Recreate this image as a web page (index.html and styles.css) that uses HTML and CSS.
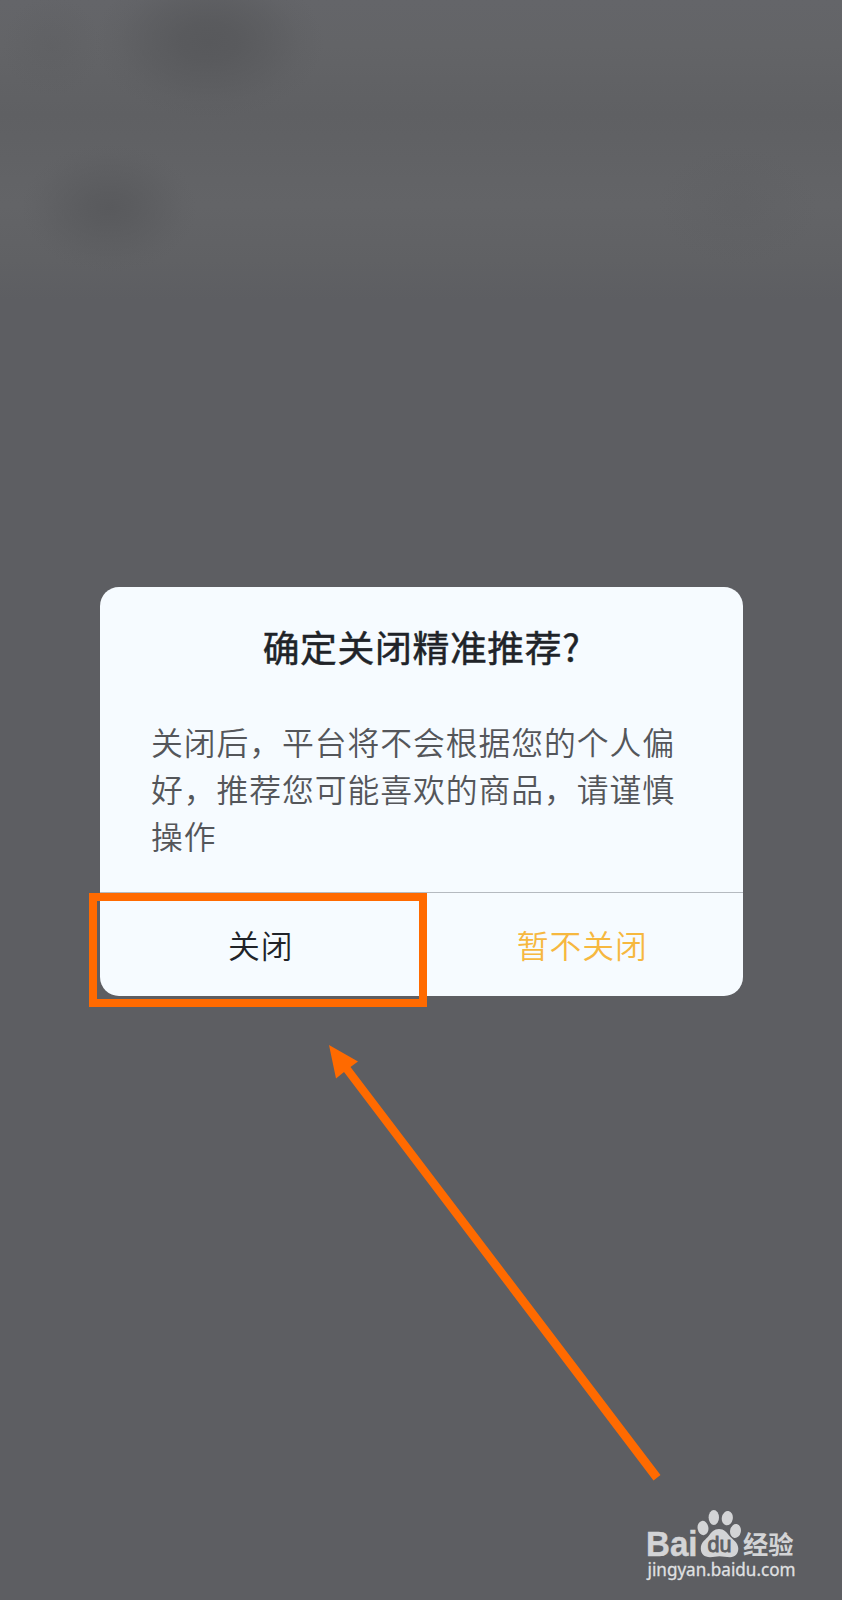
FILE: index.html
```html
<!DOCTYPE html>
<html lang="zh-CN">
<head>
<meta charset="utf-8">
<title>确定关闭精准推荐?</title>
<link rel="stylesheet" href="styles.css">
</head>
<body>
<main class="screen">
  <section class="dialog" role="dialog">
    <div class="content">
      <h1 class="title">确定关闭精准推荐?</h1>
      <p class="message">关闭后，平台将不会根据您的个人偏好，推荐您可能喜欢的商品，请谨慎操作</p>
    </div>
    <div class="actions">
      <button class="action">关闭</button>
      <button class="action primary">暂不关闭</button>
    </div>
  </section>

  <div class="highlight"></div>
  <svg class="arrow" width="842" height="1600" viewBox="0 0 842 1600">
    <path d="M329 1045L358 1061.5L350.5 1067L660.5 1475L653.5 1480.5L344 1072L336 1078.5Z"/>
  </svg>

  <svg class="watermark" width="162" height="90" viewBox="638 1500 162 90">
    <text class="brand" x="646" y="1556" textLength="51.5" lengthAdjust="spacingAndGlyphs">Bai</text>
    <ellipse cx="703" cy="1528" rx="5.4" ry="7.2" transform="rotate(-10 703 1528)"/>
    <ellipse cx="713.8" cy="1517.5" rx="5.2" ry="7.6"/>
    <ellipse cx="727.3" cy="1518.2" rx="5.5" ry="7.2" transform="rotate(10 727.3 1518.2)"/>
    <ellipse cx="735.5" cy="1531" rx="5.4" ry="7" transform="rotate(10 735.5 1531)"/>
    <path d="M719 1529C714 1529 711.500 1532 709 1535.500C706 1539.500 700.800 1542 700.800 1548.500C700.800 1554 704.500 1557.200 710 1557.200C714 1557.200 716 1556.300 719.500 1556.300C723 1556.300 726 1557.200 730 1557.200C735.300 1557.200 738.300 1553.500 738.300 1548.500C738.300 1542.500 732.500 1539.500 729.500 1536C727 1532.500 724 1529 719 1529Z"/>
    <text class="du" x="707.5" y="1552" textLength="24" lengthAdjust="spacingAndGlyphs">du</text>
    <text class="cn" x="743" y="1554" textLength="50.500" lengthAdjust="spacingAndGlyphs">经验</text>
    <text class="url" x="647.5" y="1576" textLength="148" lengthAdjust="spacingAndGlyphs">jingyan.baidu.com</text>
  </svg>
</main>
</body>
</html>
```
FILE: styles.css
```css
* { box-sizing: border-box; }
body { margin: 0; }

.screen {
  position: relative;
  width: 842px;
  height: 1600px;
  padding: 586.5px 99px 0 100px;
  overflow: hidden;
  font-family: "Noto Sans CJK SC", sans-serif;
  background:
    radial-gradient(ellipse 115px 76px at 209px 42px, #58595c 0, rgba(88,89,92,.88) 25%, rgba(88,89,92,.5) 55%, rgba(88,89,92,.15) 80%, transparent 100%),
    radial-gradient(ellipse 88px 64px at 109px 208px, #595a5d 0, rgba(89,90,93,.8) 25%, rgba(89,90,93,.4) 60%, rgba(89,90,93,.1) 85%, transparent 100%),
    radial-gradient(ellipse 50px 50px at 52px 46px, rgba(88,89,92,.25), transparent),
    radial-gradient(ellipse 80px 60px at 738px 206px, rgba(88,89,92,.2), transparent),
    linear-gradient(#646569 0, #636467 45px, #5f6063 115px, #626366 180px, #636467 205px, #606164 260px, #5d5e62 300px, #5d5e62 100%);
}

.dialog {
  display: flex;
  flex-direction: column;
  height: 409.5px;
  border-radius: 19px;
  background: #f6fbff;
}
.content {
  flex: 1;
  padding: 33px 51px 0;
}
.title {
  margin: 0;
  font-size: 36.8px;
  line-height: 53px;
  font-weight: 400;
  -webkit-text-stroke: .5px #202328;
  letter-spacing: .65px;
  text-align: center;
  white-space: nowrap;
  color: #202328;
}
.message {
  margin: 45.5px -2px 0 0;
  font-size: 31.8px;
  line-height: 46.9px;
  font-weight: 350;
  letter-spacing: .95px;
  color: #54565a;
  word-break: break-all;
}
.actions {
  display: grid;
  grid-template-columns: 1fr 1fr;
  height: 104px;
  border-top: 1px solid #b5bac0;
}
.action {
  padding: 0 0 2px;
  border: 0;
  background: none;
  font: 350 31.8px/46px "Noto Sans CJK SC", sans-serif;
  letter-spacing: .9px;
  color: #202328;
}
.primary { color: #f6b83f; }

.highlight {
  position: absolute;
  left: 89px;
  top: 893px;
  width: 338px;
  height: 114px;
  border: 8px solid #ff6a00;
}
.arrow {
  position: absolute;
  left: 0;
  top: 0;
  fill: #ff6a00;
  pointer-events: none;
}
.watermark {
  position: absolute;
  left: 638px;
  top: 1500px;
  fill: #d3d4d6;
}
.brand { font: bold 35px "Liberation Sans", sans-serif; stroke: #d3d4d6; stroke-width: .5px; }
.du { font: 22px "Liberation Sans", sans-serif; fill: #5d5e62; stroke: #5d5e62; stroke-width: .9px; }
.cn { font: bold 25.5px "Noto Sans CJK SC", sans-serif; }
.url { font: 18.5px "Noto Sans", sans-serif; fill: #e0e1e3; stroke: #e0e1e3; stroke-width: .3px; }
```
